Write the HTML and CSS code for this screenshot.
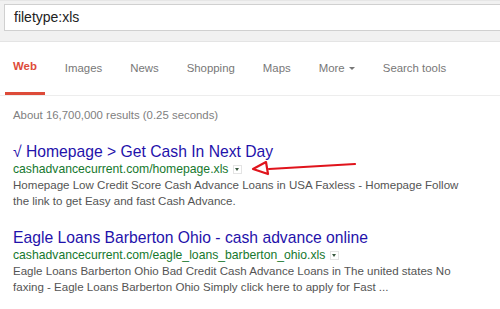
FILE: index.html
```html
<!DOCTYPE html>
<html>
<head>
<meta charset="utf-8">
<link rel="stylesheet" href="styles.css">
</head>
<body>
<div class="top">
  <div class="search">filetype:xls</div>
</div>
<div class="tabs">
  <span class="tab active">Web</span>
  <span class="tab">Images</span>
  <span class="tab">News</span>
  <span class="tab">Shopping</span>
  <span class="tab">Maps</span>
  <span class="tab">More <span class="caret"></span></span>
  <span class="tab">Search tools</span>
</div>
<div class="results">
  <div class="stats">About 16,700,000 results (0.25 seconds)</div>
  <div class="result">
    <div class="title">√ Homepage &gt; Get Cash In Next Day</div>
    <div class="url">cashadvancecurrent.com/homepage.xls <span class="dd"></span></div>
    <div class="snippet">Homepage Low Credit Score Cash Advance Loans in USA Faxless - Homepage Follow<br>the link to get Easy and fast Cash Advance.</div>
    <svg class="arrow" width="112" height="20" viewBox="0 0 112 20">
      <path d="M19 11 L105 6" stroke="#e0141c" stroke-width="2.2" fill="none" stroke-linecap="round"/>
      <path d="M16 4 L3 11 L18 16 Z" stroke="#e0141c" stroke-width="2.2" fill="none" stroke-linejoin="round"/>
    </svg>
  </div>
  <div class="result">
    <div class="title">Eagle Loans Barberton Ohio - cash advance online</div>
    <div class="url">cashadvancecurrent.com/eagle_loans_barberton_ohio.xls <span class="dd"></span></div>
    <div class="snippet">Eagle Loans Barberton Ohio Bad Credit Cash Advance Loans in The united states No<br>faxing - Eagle Loans Barberton Ohio Simply click here to apply for Fast ...</div>
  </div>
</div>
</body>
</html>
```
FILE: styles.css
```css
html, body { margin: 0; padding: 0; background: #fff; }
body { font-family: "Liberation Sans", Arial, sans-serif; width: 500px; height: 309px; overflow: hidden; }
.top { background: #f1f1f1; height: 42px; padding-top: 3px; box-sizing: border-box; padding-left: 4px; border-top: 1px solid #e6e6e6; border-bottom: 1px solid #e4e4e4; }
.search { background: #fff; border: 1px solid #d0d0d0; border-right: none; box-sizing: border-box; height: 27px; font-size: 14px; color: #222; padding-left: 9px; line-height: 25px; }
.tabs { display: flex; gap: 12px; height: 54px; border-bottom: 1px solid #ededed; padding-left: 5px; box-sizing: border-box; align-items: stretch; }
.tab { font-size: 11.4px; color: #777; padding: 0 8px; line-height: 52px; white-space: nowrap; }
.tab.active { color: #dd4b39; font-weight: bold; border-bottom: 3px solid #dd4b39; line-height: 49px; }
.caret { display: inline-block; width: 0; height: 0; border-left: 3px solid transparent; border-right: 3px solid transparent; border-top: 3px solid #777; vertical-align: middle; margin-left: 1px; }
.results { padding-left: 13px; }
.stats { font-size: 11.4px; color: #808080; margin-top: 11px; line-height: 16px; }
.result { margin-top: 19px; position: relative; }
.title { font-size: 15.7px; color: #1f12ab; line-height: 19px; white-space: nowrap; }
.url { font-size: 12.2px; color: #16782e; line-height: 16px; white-space: nowrap; }
.dd { display: inline-block; width: 7px; height: 7px; border: 1px solid #e4e4e4; position: relative; vertical-align: middle; margin-left: 1px; }
.dd::after { content: ""; position: absolute; left: 1px; top: 2px; border-left: 2.5px solid transparent; border-right: 2.5px solid transparent; border-top: 3px solid #3a5a40; }
.snippet { font-size: 11.55px; color: #545454; line-height: 16px; white-space: nowrap; }
.arrow { position: absolute; left: 237px; top: 16px; }
```
